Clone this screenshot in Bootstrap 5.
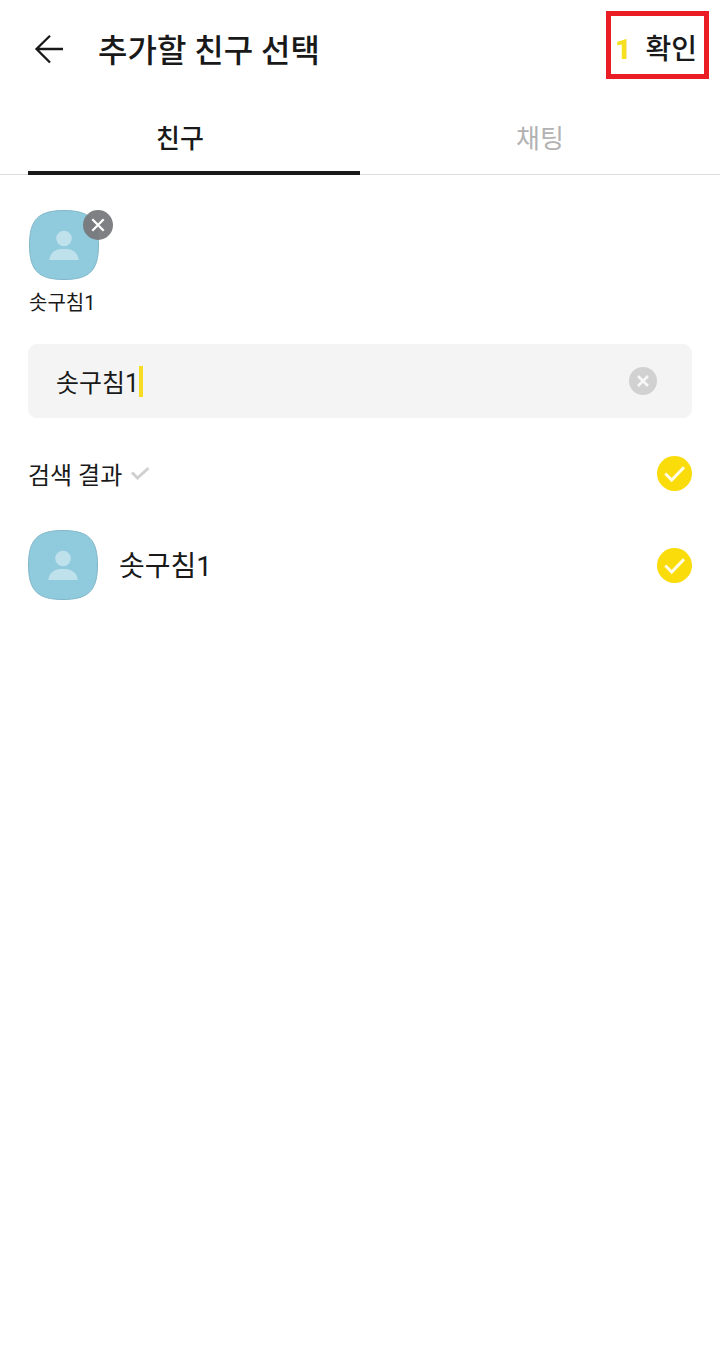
<!DOCTYPE html>
<html lang="ko">
<head>
<meta charset="utf-8">
<meta name="viewport" content="width=device-width, initial-scale=1">
<title>추가할 친구 선택</title>
<link href="https://cdn.jsdelivr.net/npm/bootstrap@5.3.0/dist/css/bootstrap.min.css" rel="stylesheet">
<style>
  body { font-family: Roboto, "Noto Sans CJK KR", sans-serif; color: #191919; background: #fff; }
  button svg, .avatar svg { display: block; }
  .topbar { height: 98px; padding: 0 11px 0 28px; }
  .page-title { font-size: 32px; line-height: 40px; font-weight: 500; padding: 4px 0 0 28px; }
  .back { padding: 0; width: 42px; }
  .confirm { height: 68px; margin-top: 11px; border: 5px solid #ea1c24; font-size: 28px; line-height: 36px; font-weight: 500; padding: 10px 7px 0 4px; gap: 14px; color: #191919; }
  .confirm:hover { color: #191919; border-color: #ea1c24; }
  .count { color: #f6df20; font-weight: 900; }
  .tabs { height: 77px; border-bottom: 1px solid #dcdcdc; }
  .tabs .tab-link { position: relative; height: 77px; font-size: 26px; line-height: 36px; color: #b2b2b2; padding: 23px 0 0; text-align: center; text-decoration: none; }
  .tabs .tab-link.active { color: #191919; font-weight: 500; }
  .tabs .tab-link.active::after { content: ""; position: absolute; left: 28px; right: 0; bottom: 0; height: 4px; background: #191919; }
  main { padding: 35px 28px 0; }
  .avatar { position: relative; width: 70px; height: 70px; }
  .remove { position: absolute; left: 54px; top: 0; padding: 0; border: 0; }
  .chip { width: 72px; padding-left: 1px; }
  .chip-name { font-size: 20px; line-height: 28px; padding-top: 9px; height: 36px; white-space: nowrap; }
  .search { height: 74px; margin-top: 28px; padding: 0 34px 0 28px; border-radius: 9px; background: #f4f4f4; }
  .search-input { width: 84px; font-size: 25px; line-height: 60px; height: 72px; padding: 0; border: 0; background: transparent; color: #191919; outline: 0; }
  .cursor { width: 4px; height: 31px; background: #f6dc25; margin-left: -1px; }
  .section-row { margin-top: 37px; height: 37px; }
  .section-title { font-size: 24px; line-height: 36px; padding-top: 4px; }
  .friend { margin-top: 38px; height: 70px; }
  .friend-name { font-size: 28px; line-height: 40px; padding: 4px 0 0 21px; }
  .form-check-input.pick { width: 35px; height: 35px; margin: 0; border: 0; border-radius: 50%; background-color: #e4e4e4; }
  .form-check-input.pick:checked { background-color: #fadc0b; background-size: 35px 35px; background-image: url("data:image/svg+xml,%3Csvg xmlns='http://www.w3.org/2000/svg' viewBox='0 0 35 35'%3E%3Cpath d='M8.3 17.5 14.7 24 27 11.2' fill='none' stroke='%23fffce8' stroke-width='3'/%3E%3C/svg%3E"); }
</style>
</head>
<body>
<svg class="d-none" aria-hidden="true">
  <symbol id="person" viewBox="0 0 70 70">
    <path d="M35 .5C60.5.5 69.5 9.500 69.500 35S60.500 69.500 35 69.500.5 60.500.5 35 9.500.5 35 .5Z" fill="#90cadd" stroke="#80b7c9"/>
    <circle cx="35" cy="28.500" r="7.800" fill="#bfe1ec"/>
    <path d="M20.300 50C21 43 26 39 33 39h4c7 0 12 4 12.700 11Z" fill="#bfe1ec"/>
  </symbol>
</svg>

<header class="topbar d-flex align-items-center">
  <button class="btn back border-0" type="button" aria-label="뒤로">
    <svg width="42" height="34" viewBox="0 0 42 34" fill="none" stroke="#191919" stroke-width="2.300"><path d="M35 17H8.500M22 3.800 8.500 17 22 30.500"/></svg>
  </button>
  <h1 class="page-title mb-0 me-auto">추가할 친구 선택</h1>
  <button class="btn confirm rounded-0 d-flex align-items-center align-self-start" type="button"><span class="count">1</span><span>확인</span></button>
</header>

<nav class="tabs row g-0">
  <a class="tab-link col-6 active" href="#friends" aria-current="page">친구</a>
  <a class="tab-link col-6" href="#chats">채팅</a>
</nav>

<main id="friends">
  <div class="chip">
    <div class="avatar">
      <svg width="70" height="70"><use href="#person"/></svg>
      <button class="btn remove rounded-circle" type="button" aria-label="솟구침1 제외">
        <svg width="30" height="30" viewBox="0 0 30 30"><circle cx="15" cy="15" r="15" fill="#77787b" fill-opacity=".94"/><path d="m9.300 9.300 11.400 11.400m0-11.400L9.300 20.700" stroke="#fff" stroke-width="2.200"/></svg>
      </button>
    </div>
    <div class="chip-name">솟구침1</div>
  </div>

  <form class="search d-flex align-items-center" role="search">
    <input class="search-input" type="text" value="솟구침1" aria-label="이름 검색" autocomplete="off">
    <span class="cursor me-auto"></span>
    <button class="btn p-0 border-0" type="reset" aria-label="지우기">
      <svg width="30" height="30" viewBox="0 0 30 30"><circle cx="15" cy="15" r="14" fill="#d1d1d1"/><path d="m10 10 10 10m0-10L10 20" stroke="#f7f7f7" stroke-width="2.600"/></svg>
    </button>
  </form>

  <div class="section-row d-flex align-items-center">
    <label class="section-title" for="pick-all">검색 결과</label>
    <svg class="ms-2" width="20" height="16" viewBox="0 0 20 16" fill="none" stroke="#d0d0d0" stroke-width="3"><path d="m2 6.500 5.500 5.500L18.500 2"/></svg>
    <input class="form-check-input pick ms-auto" id="pick-all" type="checkbox" checked>
  </div>

  <div class="friend d-flex align-items-center">
    <div class="avatar"><svg width="70" height="70"><use href="#person"/></svg></div>
    <label class="friend-name" for="pick-friend">솟구침1</label>
    <input class="form-check-input pick ms-auto" id="pick-friend" type="checkbox" checked>
  </div>
</main>
<script src="https://cdn.jsdelivr.net/npm/bootstrap@5.3.0/dist/js/bootstrap.bundle.min.js"></script>
</body>
</html>
